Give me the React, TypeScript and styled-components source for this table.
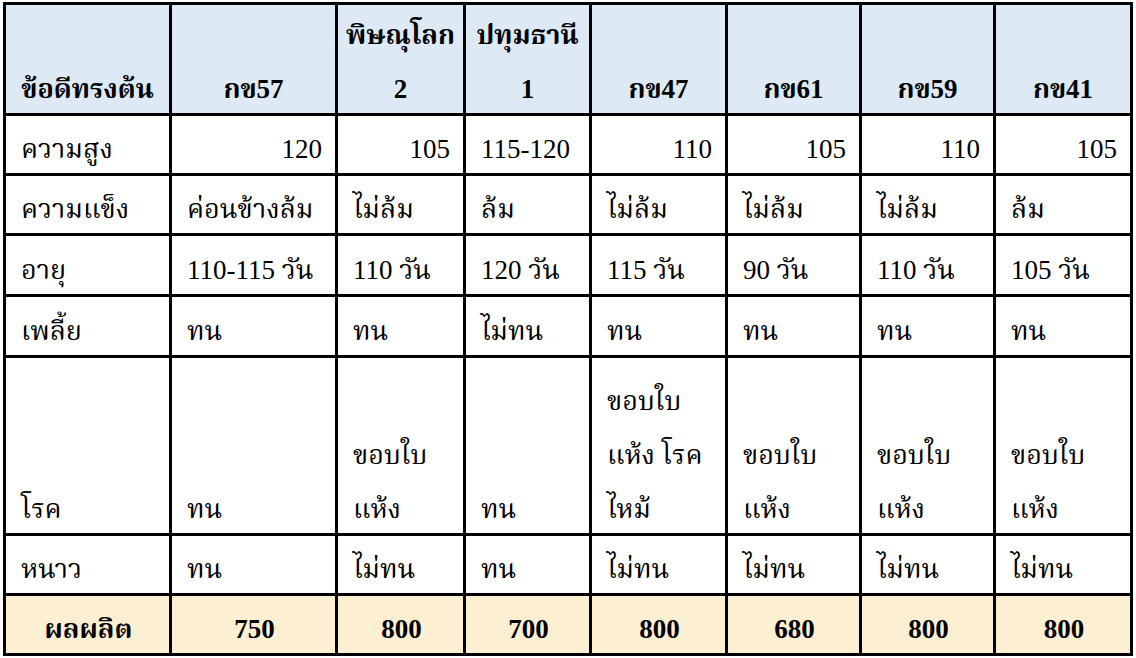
import styled, { createGlobalStyle } from 'styled-components';

const GlobalStyle = createGlobalStyle`
  html, body {
    margin: 0;
    padding: 0;
    background: #ffffff;
  }
  body {
    font-family: "Liberation Serif", "Norasi", "Noto Serif Thai", "Times New Roman", serif;
    color: #000;
  }
`;

type Align = 'left' | 'center' | 'right';

const Wrapper = styled.div`
  padding: 2px 0 0 3px;
`;

const Table = styled.table`
  border-collapse: collapse;
  table-layout: fixed;
  width: 1127px;
  font-size: 27px;
`;

const HeadRow = styled.tr`
  height: 109px;
  background-color: #dde9f5;
`;

const Row = styled.tr<{ $h: number }>`
  height: ${(p) => p.$h}px;
`;

const TotalRow = styled.tr`
  height: 60px;
  background-color: #fdefd1;
`;

const HeadCell = styled.th`
  border: 3px solid #000;
  padding: 0 6px;
  font-weight: 700;
  text-align: center;
  vertical-align: bottom;
`;

const Cell = styled.td<{ $align?: Align; $bold?: boolean }>`
  border: 3px solid #000;
  padding: 0 13px 0 15px;
  text-align: ${(p) => p.$align || 'left'};
  font-weight: ${(p) => (p.$bold ? 700 : 400)};
  vertical-align: bottom;
`;

/* one visual line of text; fixed height keeps rows at the reference size */
const Line = styled.div`
  box-sizing: border-box;
  height: 54px;
  padding-top: 6px;
  line-height: 48px;
  white-space: nowrap;
`;

const columns = [166, 166, 128, 126, 136, 134, 134, 137];

const heads: string[][] = [
  ['ข้อดีทรงต้น'],
  ['กข57'],
  ['พิษณุโลก', '2'],
  ['ปทุมธานี', '1'],
  ['กข47'],
  ['กข61'],
  ['กข59'],
  ['กข41'],
];

type DataRow = { label: string; height: number; values: string[][]; align?: Align[] };

const rows: DataRow[] = [
  {
    label: 'ความสูง',
    height: 60,
    values: [['120'], ['105'], ['115-120'], ['110'], ['105'], ['110'], ['105']],
    align: ['right', 'right', 'left', 'right', 'right', 'right', 'right'],
  },
  {
    label: 'ความแข็ง',
    height: 60,
    values: [['ค่อนข้างล้ม'], ['ไม่ล้ม'], ['ล้ม'], ['ไม่ล้ม'], ['ไม่ล้ม'], ['ไม่ล้ม'], ['ล้ม']],
  },
  {
    label: 'อายุ',
    height: 61,
    values: [['110-115 วัน'], ['110 วัน'], ['120 วัน'], ['115 วัน'], ['90 วัน'], ['110 วัน'], ['105 วัน']],
  },
  {
    label: 'เพลี้ย',
    height: 61,
    values: [['ทน'], ['ทน'], ['ไม่ทน'], ['ทน'], ['ทน'], ['ทน'], ['ทน']],
  },
  {
    label: 'โรค',
    height: 178,
    values: [
      ['ทน'],
      ['ขอบใบ', 'แห้ง'],
      ['ทน'],
      ['ขอบใบ', 'แห้ง โรค', 'ไหม้'],
      ['ขอบใบ', 'แห้ง'],
      ['ขอบใบ', 'แห้ง'],
      ['ขอบใบ', 'แห้ง'],
    ],
  },
  {
    label: 'หนาว',
    height: 60,
    values: [['ทน'], ['ไม่ทน'], ['ทน'], ['ไม่ทน'], ['ไม่ทน'], ['ไม่ทน'], ['ไม่ทน']],
  },
];

const totals = ['750', '800', '700', '800', '680', '800', '800'];

const Lines = ({ lines }: { lines: string[] }) => (
  <>
    {lines.map((l, i) => (
      <Line key={i}>{l}</Line>
    ))}
  </>
);

export default function App() {
  return (
    <>
      <GlobalStyle />
      <Wrapper>
        <Table>
          <colgroup>
            {columns.map((w, i) => (
              <col key={i} style={{ width: w }} />
            ))}
          </colgroup>
          <thead>
            <HeadRow>
              {heads.map((h, i) => (
                <HeadCell key={i}>
                  <Lines lines={h} />
                </HeadCell>
              ))}
            </HeadRow>
          </thead>
          <tbody>
            {rows.map((r) => (
              <Row key={r.label} $h={r.height}>
                <Cell>
                  <Lines lines={[r.label]} />
                </Cell>
                {r.values.map((v, i) => (
                  <Cell key={i} $align={r.align ? r.align[i] : 'left'}>
                    <Lines lines={v} />
                  </Cell>
                ))}
              </Row>
            ))}
            <TotalRow>
              <Cell $align="center" $bold>
                <Lines lines={['ผลผลิต']} />
              </Cell>
              {totals.map((t, i) => (
                <Cell key={i} $align="center" $bold>
                  <Lines lines={[t]} />
                </Cell>
              ))}
            </TotalRow>
          </tbody>
        </Table>
      </Wrapper>
    </>
  );
}
